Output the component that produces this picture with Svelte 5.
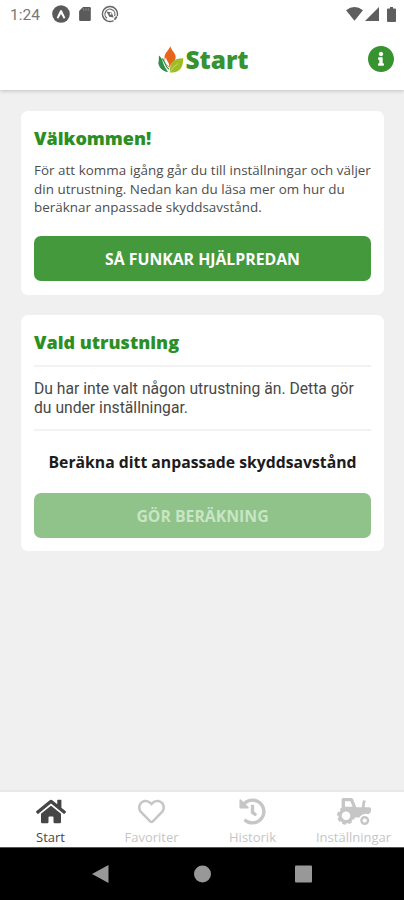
<script lang="ts">
	const tabs = [
		{ id: 'home', label: 'Start' },
		{ id: 'heart', label: 'Favoriter' },
		{ id: 'history', label: 'Historik' },
		{ id: 'tractor', label: 'Inställningar' }
	];

	let active = $state('home');
</script>

<div class="screen">
	<div class="status-bar">
		<span class="clock">1:24</span>
		<svg class="expo" viewBox="0 0 18 18">
			<circle cx="9" cy="9" r="8.8" fill="#5a5a5a" />
			<path d="M4.7 12.7L8 5.7q1-1.4 2 0l3.3 7-1.5 1L9 9l-2.8 4.7z" fill="#fff" />
			<path d="M7.5 13L9 10.4l1.5 2.6z" fill="#5a5a5a" />
		</svg>
		<svg class="sd" viewBox="0 0 12 14">
			<path d="M4 0h6.6q1.2 0 1.2 1.2v11.6q0 1.2-1.2 1.2H1.3Q.1 14 .1 12.8V4z" fill="#5a5a5a" />
			<path d="M4.7 1.2v2.6M7 1.2v2.6M9.3 1.2v2.6" stroke="#888" stroke-width="1" />
		</svg>
		<svg class="swirl" viewBox="0 0 18 18" fill="none" stroke="#666">
			<path d="M12.5 15.6A7.5 7.5 0 1 1 16.2 11" stroke-width="1.4" />
			<path d="M6 13.2a5 5 0 1 1 7.6-2.2" stroke-width="1.2" />
			<path d="M5.5 6.5l2.7 5.3 4.5.7-2-5z" fill="#666" stroke="none" />
			<circle cx="9.6" cy="8.8" r="1" fill="#fff" stroke="none" />
			<path d="M13.5 14.8l2.3-3.3" stroke-width="1.8" />
		</svg>
		<div class="signals">
			<svg class="wifi" viewBox="0 0 17 14">
				<path d="M0 3.3Q8.5-3.2 17 3.3L8.5 13.7z" />
			</svg>
			<svg class="cell" viewBox="0 0 14 14"><path d="M14 0v14H0z" /></svg>
			<svg class="battery" viewBox="0 0 9 15">
				<path d="M3 0h3v1.5h2q1 0 1 1V14q0 1-1 1H1q-1 0-1-1V2.5q0-1 1-1h2z" />
			</svg>
		</div>
	</div>

	<header>
		<div class="brand">
			<svg class="logo" viewBox="0 0 26 27">
				<path d="M12.3 0C13 4 17.5 6.8 17.7 11c0 4-4.5 5.5-6.2 10.5C7.5 19 6.5 15 6.5 11 6.5 7 11.3 4 12.3 0z" fill="#e8641b" />
				<path d="M8.2 11c-.6 3.5 3.7 5.5 3 9.5C7 18 5.8 14.8 8.2 11z" fill="#fff" />
				<path d="M1 9.5c2.8 2 3.2 5 4.5 8.5 1 3 3 5 4.5 8C4.5 25.5 1 21.5.3 17 1.3 14 .5 12 1 9.5z" fill="#2c8f49" />
				<path d="M4.3 12.5c2.5 3 3 8 6.5 10.8" stroke="#2c8f49" stroke-width="1.2" fill="none" />
				<path d="M25.2 12.2C16 12 11.2 16.3 12 26.5 21.5 27.5 25.5 21 25.2 12.2z" fill="#9ebd23" />
				<path d="M12.5 25.5Q14.5 21 20 17.5" stroke="#d4e391" stroke-width=".7" fill="none" />
			</svg>
			<h1>Start</h1>
		</div>
		<button class="info" aria-label="Information">
			<svg viewBox="8 8 496 496">
				<path d="M256 8C119.043 8 8 119.083 8 256c0 136.997 111.043 248 248 248s248-111.003 248-248C504 119.083 392.957 8 256 8zm0 110c23.196 0 42 18.804 42 42s-18.804 42-42 42-42-18.804-42-42 18.804-42 42-42zm56 254c0 6.627-5.373 12-12 12h-88c-6.627 0-12-5.373-12-12v-24c0-6.627 5.373-12 12-12h12v-64h-12c-6.627 0-12-5.373-12-12v-24c0-6.627 5.373-12 12-12h64c6.627 0 12 5.373 12 12v100h12c6.627 0 12 5.373 12 12v24z" />
			</svg>
		</button>
	</header>

	<main>
		<section class="card welcome">
			<h2>Välkommen!</h2>
			<p class="intro">
				För att komma igång går du till inställningar och väljer<br />
				din utrustning. Nedan kan du läsa mer om hur du<br />
				beräknar anpassade skyddsavstånd.
			</p>
			<button class="action">SÅ FUNKAR HJÄLPREDAN</button>
		</section>

		<section class="card equipment">
			<h2>Vald utrustning</h2>
			<p class="notice">
				Du har inte valt någon utrustning än. Detta gör<br />
				du under inställningar.
			</p>
			<h3>Beräkna ditt anpassade skyddsavstånd</h3>
			<button class="action" disabled>GÖR BERÄKNING</button>
		</section>
	</main>

	<nav class="tabs">
		{#each tabs as tab}
			<button class="tab" class:active={active === tab.id} onclick={() => (active = tab.id)}>
				<span class="icon">
					{#if tab.id === 'home'}
						<svg width="30" height="27" viewBox="0 0 576 512">
							<path d="M280.37 148.26L96 300.11V464a16 16 0 0 0 16 16l112.06-.29a16 16 0 0 0 15.92-16V368a16 16 0 0 1 16-16h64a16 16 0 0 1 16 16v95.64a16 16 0 0 0 16 16.05L464 480a16 16 0 0 0 16-16V300L295.67 148.26a12.19 12.19 0 0 0-15.3 0zM571.6 251.47L488 182.56V44.05a12 12 0 0 0-12-12h-56a12 12 0 0 0-12 12v72.61L318.47 43a48 48 0 0 0-61 0L4.34 251.47a12 12 0 0 0-1.6 16.9l25.5 31A12 12 0 0 0 45.15 301l235.22-193.74a12.19 12.19 0 0 1 15.3 0L530.9 301a12 12 0 0 0 16.9-1.6l25.5-31a12 12 0 0 0-1.7-16.93z" />
						</svg>
					{:else if tab.id === 'heart'}
						<svg width="27" height="27" viewBox="0 0 512 512">
							<path d="M458.4 64.3C400.6 15.7 311.3 23 256 79.3 200.7 23 111.4 15.6 53.6 64.3-21.6 127.6-10.6 230.8 43 285.5l175.4 178.7c10 10.2 23.4 15.9 37.6 15.9 14.3 0 27.6-5.6 37.6-15.8L469 285.6c53.5-54.7 64.7-157.9-10.6-221.3zm-23.6 187.5L259.4 430.5c-2.4 2.4-4.4 2.4-6.8 0L77.2 251.8c-36.5-37.2-43.9-107.6 7.3-150.7 38.9-32.7 98.9-27.8 136.5 10.5l35 35.7 35-35.7c37.8-38.5 97.8-43.2 136.5-10.6 51.1 43.1 43.5 113.9 7.3 150.8z" />
						</svg>
					{:else if tab.id === 'history'}
						<svg width="27" height="27" viewBox="0 0 512 512">
							<path d="M504 255.531c.253 136.64-111.18 248.372-247.82 248.468-59.015.042-113.223-20.53-155.822-54.911-11.077-8.94-11.905-25.541-1.839-35.607l11.267-11.267c8.609-8.609 22.353-9.551 31.891-1.984C173.062 425.135 212.781 440 256 440c101.705 0 184-82.311 184-184 0-101.705-82.311-184-184-184-48.814 0-93.149 18.969-126.068 49.932l50.754 50.754c10.08 10.08 2.941 27.314-11.313 27.314H24c-8.837 0-16-7.163-16-16V38.627c0-14.254 17.234-21.393 27.314-11.314l49.372 49.372C129.209 34.136 189.552 8 256 8c136.81 0 247.747 110.78 248 247.531zm-180.912 78.784l9.823-12.63c8.138-10.463 6.253-25.542-4.21-33.679L288 256.349V152c0-13.255-10.745-24-24-24h-16c-13.255 0-24 10.745-24 24v135.651l65.409 50.874c10.463 8.137 25.541 6.253 33.679-4.21z" />
						</svg>
					{:else}
						<svg width="34" height="27" viewBox="0 0 34 27">
							<path fill-rule="evenodd" d="M4.6 9.5V1.5Q4.6 0 6.1 0h8.2q1.2 0 1.7 1.1l3.3 8.1h5.5q-.2-4 1.5-7.3l2.5 1q-1.2 3-1 6.3h4.7q1.5 0 1.5 1.5v2.5q0 1-.8 1.6l-1.8 1.5a7 7 0 0 0-9 3.2h-5L4 12zM8 3.3v5.5h7.6l-2.2-5.5z" />
							<circle cx="9" cy="17.7" r="6" fill="#fff" stroke="currentColor" stroke-width="3.4" />
							<circle cx="9" cy="17.7" r="8" fill="none" stroke="currentColor" stroke-width="2" stroke-dasharray="3.7 2.583" />
							<circle cx="27.7" cy="22.5" r="3.3" fill="#fff" stroke="currentColor" stroke-width="2.4" />
						</svg>
					{/if}
				</span>
				<span class="label">{tab.label}</span>
			</button>
		{/each}
	</nav>

	<div class="system-nav">
		<svg viewBox="0 0 17 18"><path d="M16.5 0v18L0 9z" /></svg>
		<svg viewBox="0 0 17 18"><circle cx="8.5" cy="9" r="8.5" /></svg>
		<svg viewBox="0 0 17 18"><rect y=".5" width="17" height="17" rx="1" /></svg>
	</div>
</div>

<style>
	:global(body) {
		margin: 0;
		background: #f0f0f0;
	}

	.screen {
		width: 404px;
		height: 900px;
		display: flex;
		flex-direction: column;
		overflow: hidden;
		background: #f0f0f0;
		font-family: 'Open Sans', sans-serif;
	}

	svg {
		display: block;
		flex: none;
	}

	button {
		border: none;
		padding: 0;
		font-family: inherit;
		cursor: pointer;
	}

	h1,
	h2,
	h3,
	p {
		margin: 0;
		white-space: nowrap;
	}

	.status-bar {
		height: 28px;
		box-sizing: border-box;
		padding: 0 8px 0 10px;
		display: flex;
		align-items: center;
		background: #fff;
	}

	.clock {
		width: 42px;
		padding-top: 1px;
		font: 15.5px Roboto, sans-serif;
		color: #777;
	}

	.expo {
		width: 18px;
		height: 18px;
		margin-right: 9px;
	}

	.sd {
		width: 12px;
		height: 14px;
		margin-right: 10px;
	}

	.swirl {
		width: 18px;
		height: 18px;
	}

	.signals {
		display: flex;
		align-items: center;
		margin-left: auto;
		fill: #5e5e5e;
	}

	.wifi {
		width: 17px;
		height: 14px;
		margin-right: 2px;
	}

	.cell {
		width: 14px;
		height: 14px;
		margin-right: 8px;
	}

	.battery {
		width: 9px;
		height: 15px;
	}

	header {
		height: 62px;
		box-sizing: border-box;
		padding: 0 10px 0 39px;
		display: grid;
		grid-template-columns: 1fr 26px;
		align-items: center;
		background: #fff;
		box-shadow: 0 1px 4px rgba(0, 0, 0, 0.2);
		clip-path: inset(0 0 -6px);
	}

	.brand {
		display: flex;
		align-items: center;
		justify-content: center;
		gap: 1px;
	}

	.logo {
		width: 26px;
		height: 27px;
	}

	h1 {
		padding-top: 2px;
		font-size: 24.4px;
		line-height: 32px;
		font-weight: 800;
		color: #36932f;
	}

	.info {
		background: none;
	}

	.info svg {
		width: 26px;
		height: 26px;
		fill: #36932f;
	}

	main {
		flex: 1;
		padding: 21px 20px 0 21px;
		display: flex;
		flex-direction: column;
		gap: 20px;
	}

	.card {
		box-sizing: border-box;
		padding: 14px 13px 0;
		background: #fff;
		border-radius: 7px;
		display: flex;
		flex-direction: column;
	}

	.welcome {
		height: 184px;
	}

	.equipment {
		height: 236px;
	}

	h2 {
		font-size: 18px;
		line-height: 26px;
		font-weight: 800;
		color: #2c8f24;
	}

	.intro {
		margin-top: 10px;
		font-size: 13.4px;
		line-height: 18.5px;
		letter-spacing: 0.04px;
		color: #4d4d4d;
	}

	.action {
		flex: none;
		height: 45px;
		margin-top: 19px;
		padding-top: 1px;
		border-radius: 7px;
		background: #43993c;
		color: #fff;
		font-size: 15.8px;
		font-weight: 700;
	}

	.action:disabled {
		margin-top: 19px;
		padding-top: 0;
		background: #8fc38a;
		color: #c9e5c4;
	}

	.notice {
		margin-top: 10px;
		padding: 13px 0 12px;
		border-top: 2px solid #f2f2f2;
		border-bottom: 2px solid #f2f2f2;
		font: 15.7px/18.5px Roboto, sans-serif;
		color: #484848;
	}

	h3 {
		margin-top: 19px;
		text-align: center;
		font-size: 15.75px;
		line-height: 24px;
		font-weight: 700;
		color: #1c1c1c;
	}

	.tabs {
		height: 57px;
		box-sizing: border-box;
		border-top: 2px solid #e9e9e9;
		display: grid;
		grid-template-columns: repeat(4, 1fr);
		background: #fff;
	}

	.tab {
		display: flex;
		flex-direction: column;
		align-items: center;
		justify-content: flex-start;
		padding-top: 6px;
		background: none;
		color: #c6c6c6;
	}

	.tab.active {
		color: #464646;
	}

	.icon svg {
		fill: currentColor;
	}

	.label {
		margin-top: 3px;
		font-size: 13px;
		line-height: 18px;
	}

	.system-nav {
		height: 53px;
		box-sizing: border-box;
		border-top: 1px solid #555;
		padding-left: 92px;
		display: flex;
		align-items: center;
		gap: 84.5px;
		background: #000;
	}

	.system-nav svg {
		width: 17px;
		height: 18px;
		fill: #989898;
	}
</style>
